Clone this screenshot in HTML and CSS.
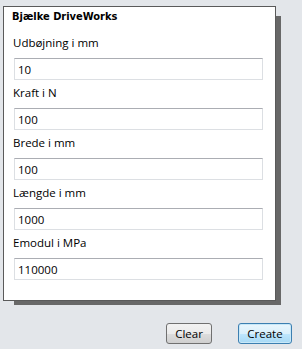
FILE: index.html
```html
<!DOCTYPE html>
<html lang="da">
<head>
  <meta charset="UTF-8">
  <title>Bjælke DriveWorks</title>
  <link rel="stylesheet" href="styles.css">
</head>
<body>
  <form class="panel">
    <h2 class="title">Bjælke DriveWorks</h2>

    <label class="label" for="udbojning">Udbøjning i mm</label>
    <input class="field" id="udbojning" value="10">

    <label class="label" for="kraft">Kraft i N</label>
    <input class="field" id="kraft" value="100">

    <label class="label" for="brede">Brede i mm</label>
    <input class="field" id="brede" value="100">

    <label class="label" for="laengde">Længde i mm</label>
    <input class="field" id="laengde" value="1000">

    <label class="label" for="emodul">Emodul i MPa</label>
    <input class="field" id="emodul" value="110000">
  </form>

  <div class="actions">
    <button type="button" class="btn">Clear</button>
    <button type="button" class="btn primary">Create</button>
  </div>
</body>
</html>
```

FILE: styles.css
```css
/* baggrund og grundskrift */
body {
  margin: 0;
  background: #e3e6ea;
  font-family: "Open Sans", "DejaVu Sans", sans-serif;
  font-size: 11.5px;
  color: #000;
}

/* hvid boks med mørk skygge */
.panel {
  box-sizing: border-box;
  width: 273px;
  height: 295px;
  margin: 6px 0 0 3px;
  padding: 2px 0 0 8px;
  background: #fff;
  border: 1px solid #5a5a5a;
  box-shadow: 8px 7px 0 -3px #686868;
  display: flex;
  flex-direction: column;
  align-items: flex-start;
}

.title {
  margin: 0 0 10px 0;
  font-family: "DejaVu Sans Condensed", "DejaVu Sans", sans-serif;
  font-size: 11px;
  font-weight: bold;
  line-height: 16px;
}

.label {
  line-height: 16px;
  height: 16px;
  margin: 0 0 7px 1px;
}

/* tekstfelter */
.field {
  box-sizing: border-box;
  width: 249px;
  height: 22px;
  margin: 0 0 5px 2px;
  padding: 0 0 0 3px;
  font-family: "Open Sans", "DejaVu Sans", sans-serif;
  font-size: 11.5px;
  color: #000;
  background: #fff;
  border: 1px solid #dcdfe3;
  border-top-color: #abadb3;
  border-radius: 0;
  outline: none;
}

/* knapper nederst */
.actions {
  display: flex;
  justify-content: flex-end;
  gap: 26px;
  padding: 22px 10px 0 0;
}

.btn {
  box-sizing: border-box;
  width: 46px;
  height: 21px;
  padding: 0;
  font-family: "Open Sans", "DejaVu Sans", sans-serif;
  font-size: 11.5px;
  color: #000;
  background: linear-gradient(#f2f2f2, #ebebeb 50%, #dddddd 51%, #cfcfcf);
  border: 1px solid #707070;
  border-radius: 3px;
}

.btn.primary {
  width: 54px;
  border-color: #3c7fb1;
  background: linear-gradient(#eaf6fd, #d9f0fc 50%, #bee6fd 51%, #a7d9f5);
  box-shadow: inset 0 0 0 1px #c8e8f8;
}
```
